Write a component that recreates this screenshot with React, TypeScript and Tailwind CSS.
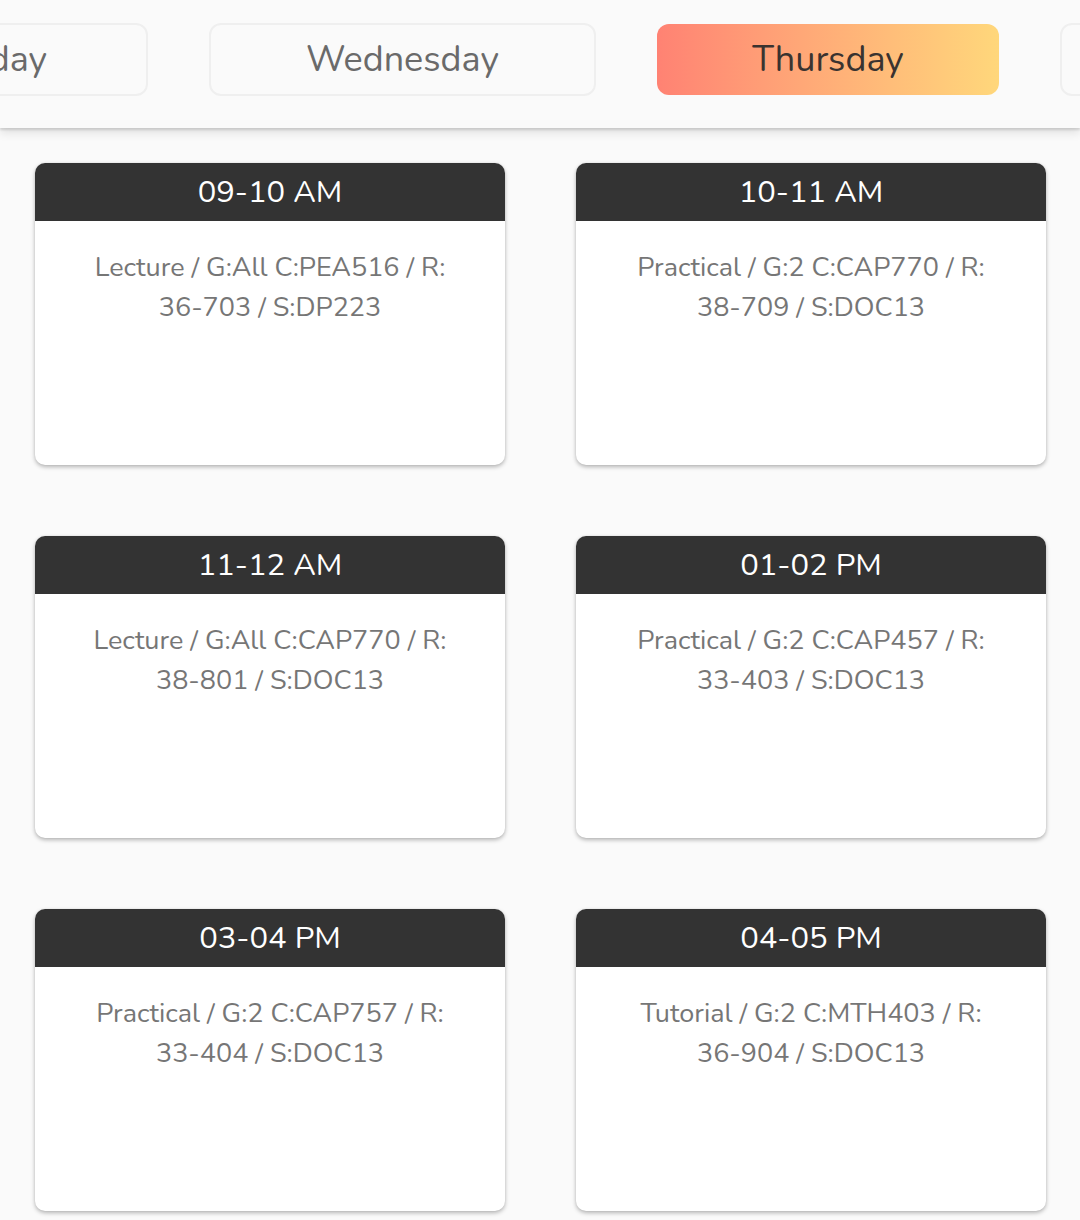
import React from "react";

const days = [
  { name: "Tuesday", w: "w-[336px]", active: false },
  { name: "Wednesday", w: "w-[387px]", active: false },
  { name: "Thursday", w: "w-[342px]", active: true },
  { name: "Friday", w: "w-[300px]", active: false },
];

const slots = [
  { time: "09-10 AM", l1: "Lecture / G:All C:PEA516 / R:", l2: "36-703 / S:DP223" },
  { time: "10-11 AM", l1: "Practical / G:2 C:CAP770 / R:", l2: "38-709 / S:DOC13" },
  { time: "11-12 AM", l1: "Lecture / G:All C:CAP770 / R:", l2: "38-801 / S:DOC13" },
  { time: "01-02 PM", l1: "Practical / G:2 C:CAP457 / R:", l2: "33-403 / S:DOC13" },
  { time: "03-04 PM", l1: "Practical / G:2 C:CAP757 / R:", l2: "33-404 / S:DOC13" },
  { time: "04-05 PM", l1: "Tutorial / G:2 C:MTH403 / R:", l2: "36-904 / S:DOC13" },
];

export default function App() {
  return (
    <div
      className="w-[1080px] h-[1220px] overflow-hidden bg-[#fafafa]"
      style={{ fontFamily: "Nunito, Lato, 'Open Sans', sans-serif" }}
    >
      <div className="relative z-10 h-[128px] bg-[#fafafa] shadow-[0_2px_2px_rgba(0,0,0,0.12),0_5px_9px_rgba(0,0,0,0.1)] overflow-hidden">
        <div className="flex gap-[61px] pt-[23px] ml-[-188px]">
          {days.map((d) =>
            d.active ? (
              <div
                key={d.name}
                className={`${d.w} shrink-0 h-[71px] mt-[1px] rounded-[12px] bg-gradient-to-r from-[#ff8273] to-[#ffd77b] flex items-center justify-center text-[36px] text-[#3a3330]`}
              >
                {d.name}
              </div>
            ) : (
              <div
                key={d.name}
                className={`${d.w} shrink-0 h-[73px] rounded-[12px] border-2 border-[#efefef] bg-[#fafafa] flex items-center justify-center text-[36px] text-[#6a6a6a]`}
              >
                {d.name}
              </div>
            )
          )}
        </div>
      </div>
      <div className="grid grid-cols-[470px_470px] gap-x-[71px] gap-y-[71px] pl-[35px] pt-[35px]">
        {slots.map((s) => (
          <div
            key={s.time}
            className="h-[302px] rounded-[10px] bg-white overflow-hidden shadow-[0_2px_4px_rgba(0,0,0,0.28),0_0_2px_rgba(0,0,0,0.08)]"
          >
            <div className="h-[58px] bg-[#333333] flex items-center justify-center text-white text-[31px]">
              {s.time}
            </div>
            <div className="pt-[27px] text-center text-[27px] leading-[40px] text-[#767676]">
              <div>{s.l1}</div>
              <div>{s.l2}</div>
            </div>
          </div>
        ))}
      </div>
    </div>
  );
}
